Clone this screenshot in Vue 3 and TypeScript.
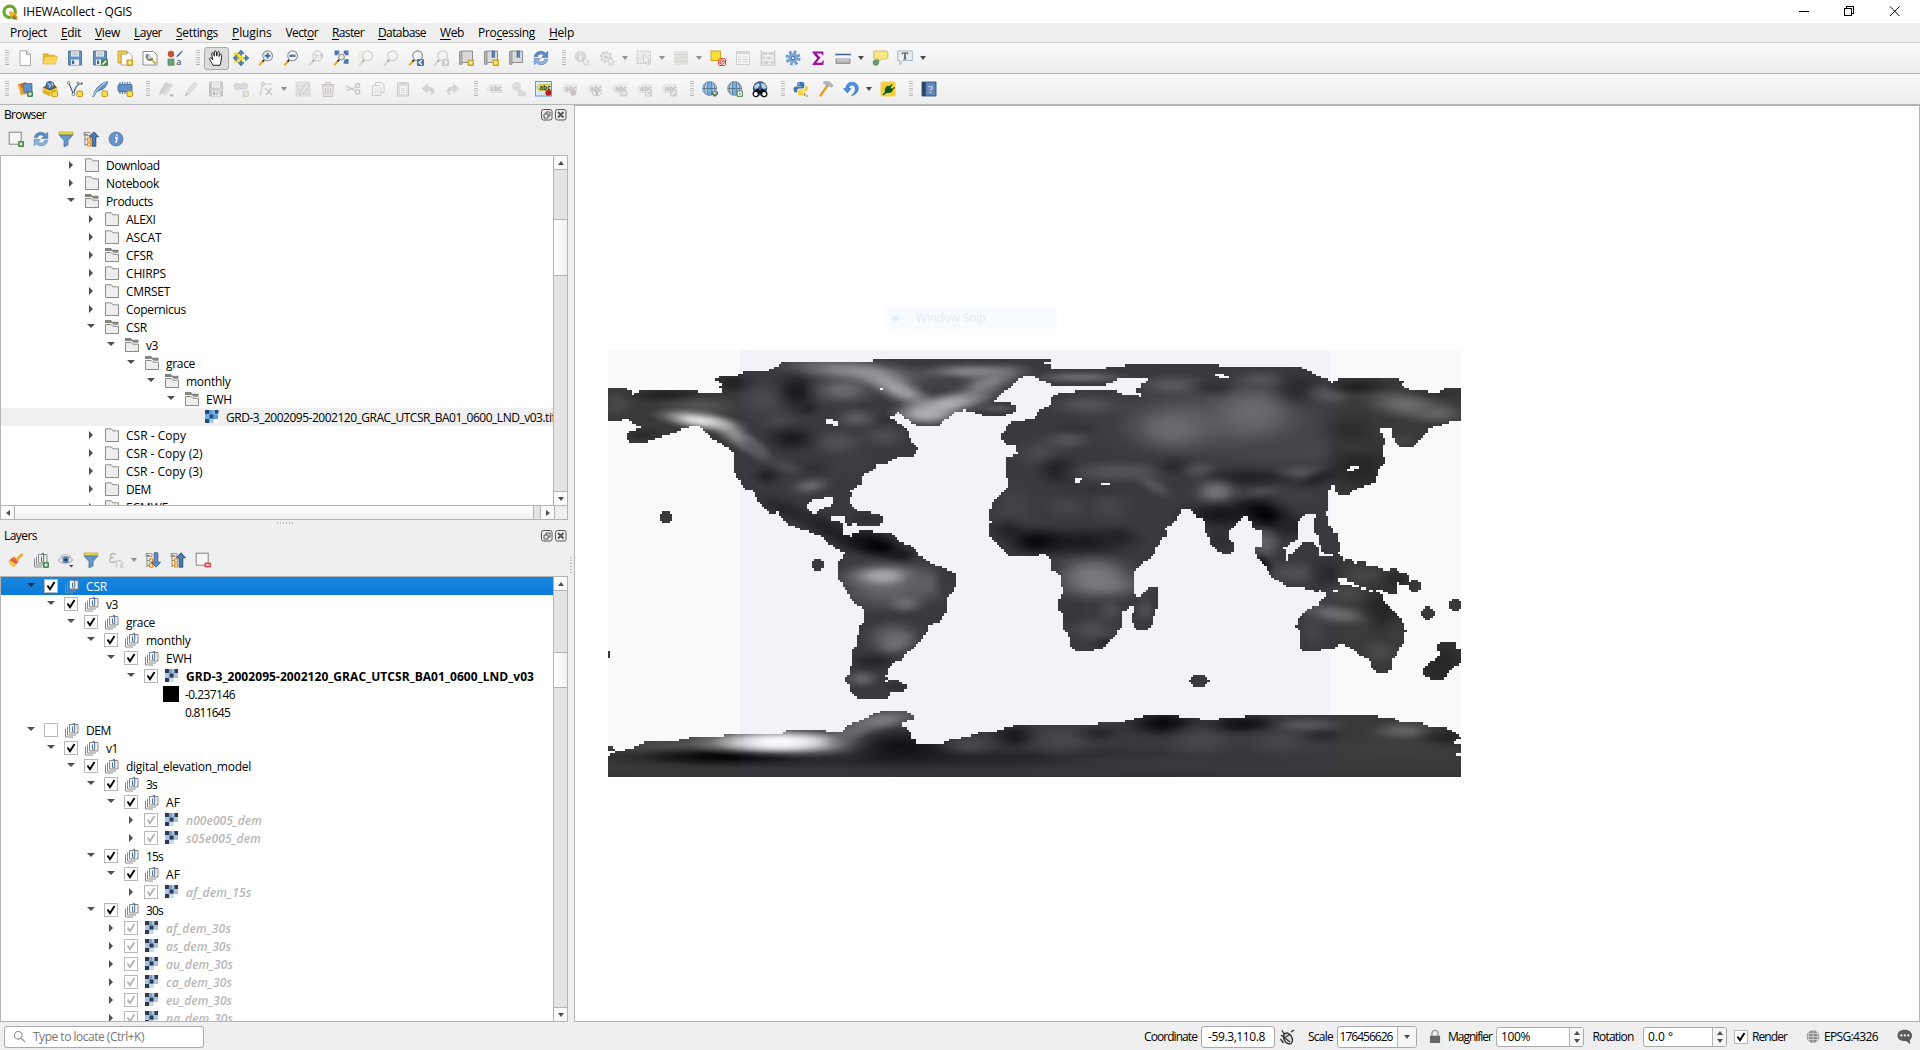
<script setup lang="ts">
type Pt = [number, number]

/* Spreads or tightens a label so that it takes the given width. */
const vFit = {
  mounted(el: HTMLElement, binding: { value?: number }) {
    if (!binding.value) return
    const n = (el.textContent || '').trim().length
    const w = el.getBoundingClientRect().width
    if (n > 1) el.style.letterSpacing = ((binding.value - w) / n).toFixed(3) + 'px'
  },
}

/* ---------- icons (16 x 16) ---------- */
const plusBadge = '<rect x="10" y="10" width="6" height="6" rx="1.2" fill="#4b8a4f"/><path d="M13 11.2v3.6M11.2 13h3.6" stroke="#fff" stroke-width="1.1"/>'
const starBadge = '<rect x="9.5" y="9.5" width="6.5" height="6.5" rx="1" fill="#c9a40e"/><path d="M12.75 10.4v4.8M10.4 12.8h4.8M11.1 11.1l3.3 3.3M14.4 11.1l-3.3 3.3" stroke="#fff6c0" stroke-width=".9"/>'
const newBadge = '<rect x="10" y="10" width="5.5" height="5.5" rx="1" fill="#f5dc4a" stroke="#b98f12" stroke-width=".9"/>'
const lens = '<path d="M1.3 15.2L5.6 10.6" stroke="#e0a81c" stroke-width="2"/><path d="M4.6 11.6l1.6-1.7" stroke="#222" stroke-width="1.6"/><circle cx="9.6" cy="5.8" r="4.9" fill="#f3f5f7" stroke="#8b8f93" stroke-width="1.1"/>'
const doc = '<path d="M3 .8h6.8L13.5 4.5v11H3z" fill="#fff" stroke="#a2a2a2" stroke-width=".9"/><path d="M9.6 .8v3.9h3.9" fill="#e8e8e8" stroke="#a2a2a2" stroke-width=".9"/>'
const disk = '<path d="M1.5 1h13v14h-13z" fill="#6490c2" stroke="#41668f" stroke-width=".8"/><rect x="4" y="1.2" width="8" height="5.4" fill="#e4e8ee"/><path d="M5 3h6M5 4.8h6" stroke="#9aa" stroke-width=".6"/><rect x="4" y="9.5" width="8" height="5.5" fill="#e9edf2"/><rect x="5" y="10.5" width="2.2" height="3.6" fill="#41668f"/>'
const refresh = '<path d="M1.2 6.8C2 3 4.600 1.300 8 1.300c2 0 3.400.7 4.600 1.900L14.800 1.200V7.400H8.600L10.700 5.200C9.900 4.400 9 4 8 4 6 4 5 5 4.500 6.800z" fill="#5b8cc0" stroke="#3f6ea3" stroke-width=".5"/><path d="M14.800 9.200c-.8 3.800-3.400 5.500-6.800 5.500-2 0-3.400-.7-4.600-1.900L1.200 14.800V8.600h6.200L5.300 10.800C6.100 11.600 7 12 8 12c2 0 3-1 3.500-2.800z" fill="#8fb4dc" stroke="#3f6ea3" stroke-width=".5"/>'
const tag = '<path d="M1 7.500L4 4h11.500v7.500H4z" fill="#e8e0b8" stroke="#b8b08c" stroke-width=".8"/><text x="4" y="10.400" font-size="6.500" font-weight="700" font-family="Open Sans, sans-serif" fill="#555">abc</text>'
const globe = '<circle cx="7.600" cy="7.500" r="6.900" fill="#b9d7f0" stroke="#6684a3" stroke-width=".9"/><path d="M5.300 1h4.600v13H5.300z" fill="#5b9bd8" opacity=".7"/><path d="M.8 7.500h13.600M3.800 2c-1.800 3.500-1.800 7.500 0 11M11.400 2c1.800 3.500 1.800 7.500 0 11M5.800 1c-.8 4-.8 9 0 13M9.400 1c.8 4 .8 9 0 13" fill="none" stroke="#54687e" stroke-width=".8"/>'
const book = '<path d="M3 1h11.500v11.500H4.500L3 14.500z" fill="#dadada" stroke="#8f8f8f"/><path d="M1.500 1.500H4v12.800H1.500z" fill="#b5b5b5" stroke="#888" stroke-width=".8"/>'
const mark = '<path d="M9 1h2.600v7L10.300 6.500 9 8z" fill="#4f80b8" stroke="#2f5786" stroke-width=".5"/>'
const tree = '<path d="M2 1v14M2 3.500h3M2 8.500h3M2 13.500h3" fill="none" stroke="#888" stroke-width="1"/><path d="M1 1.500h6v3H1z" fill="none" stroke="#888" stroke-width=".8"/><rect x="4.600" y="7" width="3" height="3" fill="#fff" stroke="#f08a12" stroke-width="1.200"/><rect x="4.600" y="12" width="3" height="3" fill="#fff" stroke="#f08a12" stroke-width="1.200"/>'

const icons: Record<string, string> = {
  newdoc: doc,
  open: '<path d="M.8 3.200h5l1.400 1.600h6v9H.8z" fill="#e9b62a"/><path d="M3 6.500h12.700L13.300 14H.9z" fill="#ffd75a" stroke="#e0ac28" stroke-width=".6"/>',
  save: disk,
  saveas: disk + '<rect x="9" y="9" width="7" height="7" rx="1" fill="#4b8a4f"/><path d="M10.500 14.500L14.300 10.700" stroke="#fff" stroke-width="1.500"/>',
  layout: '<path d="M4 2.500h8l3 3V15H4z" fill="#fff" stroke="#a2a2a2" stroke-width=".9"/><path d="M1 1h9v3H4v9H1z" fill="#f0cf54" stroke="#b8922a" stroke-width=".8"/>' + starBadge,
  layoutmgr: '<path d="M1 1.500h10.500l3.500 3.500V15H1z" fill="#fff" stroke="#8f8f8f" stroke-width="1"/><path d="M3.500 4h5v4h-5z" fill="#b9d0e8"/><path d="M8 8l6 6" stroke="#d8b23c" stroke-width="2.200"/><path d="M6 4.500a3 3 0 1 0 4.500 3.500" fill="none" stroke="#777" stroke-width="1.800"/>',
  style: '<circle cx="4" cy="4" r="3.200" fill="#c8502c"/><rect x="1" y="9" width="6" height="6.200" fill="#6fa077" stroke="#4d8057" stroke-width=".7"/><path d="M9 7.500l1.500-2.800L14.800.8l.8.8-3.800 4.500z" fill="#456f9f"/><text x="9.300" y="15" font-size="9" font-family="Open Sans, sans-serif" fill="#333">a</text>',
  hand: '<path d="M5 15.300C3.800 12.500 1.800 10.500 1.600 8.700c0-1.300 1.500-1.300 2.200-.2l1 1.400L3.700 3.900c-.2-1.400 1.400-1.700 1.800-.4l.9 2.700L6.300 2c0-1.400 1.800-1.400 2 0l.4 4.100.8-3.700c.4-1.300 2-1 1.900.4L11 6.500l.9-1.700c.7-1.100 2-.5 1.800.7-.4 3-.5 6-1.600 9.800z" fill="#fff" stroke="#222" stroke-width="1"/>',
  pan: '<path d="M1 2.500h6l3 3v7H1z" fill="#f6dd3a"/><path d="M8 0l3 3.500H5zM8 16l3-3.500H5zM0 8l3.500-3v6zM16 8l-3.500-3v6z" fill="#5583b8" stroke="#36608f" stroke-width=".6"/><path d="M8 3v2.500M8 13v-2.500M3 8h2.500M13 8h-2.500" stroke="#5583b8" stroke-width="2"/>',
  zin: lens + '<path d="M9.600 2.800v6M6.600 5.800h6" stroke="#3f6ea3" stroke-width="2"/>',
  zout: lens + '<path d="M6.600 5.800h6" stroke="#3f6ea3" stroke-width="2.200"/>',
  z11: lens + '<text x="6" y="8" font-size="6" font-weight="700" font-family="Open Sans, sans-serif" fill="#555">1:1</text>',
  zfull: '<path d="M1.500.5h4.800v4.800H1.500zM10.700.5h4.800v4.800h-4.800zM10.700 9h4.800v4.800h-4.800z" fill="#4a78ad"/><path d="M4.500 5.300l2-2M12.300 5.300l-2-2M12.300 9l-2 2" stroke="#f4f4f4" stroke-width="1"/><path d="M1.300 15.200l4.300-5" stroke="#e0a81c" stroke-width="2"/><path d="M4.600 11.600l1.800-2.200" stroke="#222" stroke-width="1.600"/><circle cx="8.500" cy="7" r="2.900" fill="#eee" stroke="#888"/>',
  zsel: '<rect x="0" y="1" width="8" height="9" fill="#f0e27a"/>' + lens,
  zlayer: lens,
  zlast: lens + '<rect x="9" y="9" width="7" height="7" rx="1" fill="#4a78ad"/><path d="M14 10.300l-3 2.200 3 2.200" fill="none" stroke="#fff" stroke-width="1.300"/>',
  znext: lens + '<rect x="9" y="9" width="7" height="7" rx="1" fill="#888"/><path d="M11 10.300l3 2.200-3 2.200" fill="none" stroke="#fff" stroke-width="1.300"/>',
  view: book + starBadge,
  bmnew: book + mark + starBadge,
  bm: book + mark,
  refresh,
  ident: '<circle cx="6.500" cy="6.500" r="5.800" fill="#9aa9bb"/><path d="M6.500 5.500v4.500M6.500 2.500v1.600" stroke="#fff" stroke-width="1.800"/><path d="M9 8l6.500 3.500-2.500.8 2 2.200-1.300 1-2-2.200-1.200 2z" fill="#fff" stroke="#777" stroke-width=".8"/>',
  action: '<circle cx="7" cy="7" r="5" fill="none" stroke="#999" stroke-width="2.400" stroke-dasharray="2.400 1.400"/><circle cx="7" cy="7" r="4.200" fill="#ddd" stroke="#999"/><path d="M5.500 5l3.500 2-3.500 2z" fill="#777"/><path d="M9 8l6.500 3.500-2.500.8 2 2.200-1.300 1-2-2.200-1.200 2z" fill="#fff" stroke="#777" stroke-width=".8"/>',
  select: '<rect x="1" y="1" width="13.500" height="12.500" fill="#ddd9b4" stroke="#777" stroke-dasharray="2 1.400"/><path d="M7 5l7.500 5.500-3 .5 2 3.200-1.500.8-2-3.200-2 2z" fill="#fff" stroke="#777" stroke-width=".8"/>',
  table: '<path d="M1 1h14v14H1z" fill="#cfcaa4"/><path d="M1 4.500h14M1 8h14M1 11.500h14" stroke="#a39f84" stroke-width="1"/>',
  desel: '<rect x="1" y="1" width="9.500" height="9.500" fill="#fbe03c" stroke="#c9a91c"/><rect x="8.700" y="8.700" width="6.800" height="6.800" rx="1" fill="#fff" stroke="#d33"/><circle cx="12.100" cy="12.100" r="2.200" fill="none" stroke="#d33" stroke-width="1"/><path d="M10.500 13.700l3.200-3.200" stroke="#d33"/>',
  attr: '<rect x="1.500" y="1.500" width="13" height="13" fill="#fff" stroke="#999"/><path d="M2 3h12" stroke="#9ab" stroke-width="2.500"/><path d="M3 7h3M7.500 7h5.500M3 9.500h3M7.500 9.500h5.500M3 12h3M7.500 12h5.500" stroke="#999"/>',
  calc: '<path d="M1.500.5v15M14.500.5v15" stroke="#888" stroke-width="1.600"/><path d="M1.500 3.500h13M1.500 8h13M1.500 12.500h13" stroke="#aaa"/><path d="M4 2v3M6 2v3M10 2v3M12 2v3M4 6.500v3M8 6.500v3M10 6.500v3M5 11v3M7 11v3M12 11v3" stroke="#888" stroke-width="1.500"/><path d="M1 15.200h14" stroke="#888"/>',
  gear: '<circle cx="8" cy="8" r="6" fill="none" stroke="#6a98cc" stroke-width="3" stroke-dasharray="2.600 2.110"/><circle cx="8" cy="8" r="5" fill="#7ba6d6"/><circle cx="8" cy="8" r="2.200" fill="#4f7fb5"/><circle cx="8" cy="8" r="1.100" fill="#f4f4f4"/>',
  sigma: '<path d="M2.500 1.500h10.800v3.800h-1C12 3.800 11.500 3.400 10 3.400H6.500l4 4.300-4.200 5H10.400c1.500 0 2.100-.5 2.500-2.200h1l-.6 4.500H2.500v-1L7.200 8.300 2.500 2.600z" fill="#a0109c"/>',
  measure: '<path d="M.8 4.500h14.600" stroke="#3b5f8a" stroke-width="1.500"/><path d="M.8 3v3M15.200 3v3" stroke="#999"/><rect x="1" y="9" width="14" height="4.500" fill="#b4b4b4" stroke="#888" stroke-width=".8"/><path d="M3 9v2M5 9v2M7 9v2M9 9v2M11 9v2M13 9v2" stroke="#fff" stroke-width=".7"/>',
  tip: '<path d="M3 1h11c1.200 0 1.800.8 1.800 1.800V7c0 1.200-.8 2-2 2H9.500L6.500 11.500V9H4C2.800 9 1.800 8.200 1.800 7V2.500C1.800 1.500 2.200 1 3 1z" fill="#f8e88a" stroke="#d3b846" stroke-width=".9"/><circle cx="3.800" cy="12.600" r="2.700" fill="#6b9e74" stroke="#437a4e" stroke-width=".7"/><path d="M5.500 9.500l1.500 2" stroke="#888"/>',
  textann: '<path d="M.8 1h14.500v9.500H6L2.800 14.800v-4.300h-2z" fill="#eaf0f5" stroke="#a9b4bd" stroke-width="1"/><path d="M4.800 2.600h6.400v2h-.7l-.5-1H8.800v4.800l1 .5v.5H6.200v-.5l1-.5V3.600H6l-.5 1h-.7z" fill="#555"/>',
  dsm: '<path d="M1 3.500l8-2.500 3 8-8 3z" fill="#d8662c"/><path d="M2 9L.5 5 4 4z" fill="#f3c63a"/><path d="M3 6.500l6 .5 1.500 6-7 1z" fill="#e9a42c"/><path d="M6 2.500h9v9H7z" fill="#5f91c8" stroke="#3d6a9c" stroke-width=".7"/>' + plusBadge,
  gpkg: '<path d="M.8 6.500L8 9.500v6L.8 12z" fill="#e2ae22"/><path d="M15.200 6.500L8 9.500v6l7.200-3.500z" fill="#f6d24c"/><path d="M.8 6.500L5 4l7-.5 3.200 3L8 9.500z" fill="#7a5a14"/><circle cx="8" cy="4.400" r="4" fill="#4e7ba8" stroke="#2c4a6c" stroke-width=".8"/><path d="M5.500 2.500l3 1.500-1 2.500M10 1.500l1 3" stroke="#e3edf5" fill="none" stroke-width="1"/><path d="M.8 6.800L8 9.800l7.200-3v2L8 12 .8 9z" fill="#f0c63c"/>' + newBadge,
  shp: '<path d="M1.500 1.500L6.500 13C8 8 9 3 15 2.500" fill="none" stroke="#44607f" stroke-width="1.200"/><circle cx="1.700" cy="1.800" r="1.300" fill="#fff" stroke="#555" stroke-width=".7"/><circle cx="6.500" cy="13.200" r="1.400" fill="#fff" stroke="#555" stroke-width=".7"/><circle cx="11" cy="2" r="1.100" fill="#fff" stroke="#555" stroke-width=".7"/><circle cx="14.800" cy="2.500" r="1" fill="#555"/>' + newBadge,
  spatia: '<path d="M.6 15.500C3 8 8 2 15.500.5c-.3 4-3 8-8 9-2 .6-3.500 1.500-5.600 6z" fill="#6693c6" stroke="#3f6896" stroke-width=".7"/><path d="M1 15C4 9 9 4 14 1.500" fill="none" stroke="#dfeaf5" stroke-width=".9"/>' + newBadge,
  mem: '<path d="M3 1v12M5.500 1v12M8 1v12M10.500 1v12M13 1v12" stroke="#5580b0" stroke-width="1.200"/><rect x="1" y="3.500" width="14" height="7" rx="1" fill="#6391c6" stroke="#3f6a9c" stroke-width=".8"/>' + newBadge,
  edits: '<path d="M1.500 13.500L2.500 10 8 1.500l3 2L5 12z" fill="#999" stroke="#777" stroke-width=".7"/><path d="M6 14l1-3.500 5-8 2.600 1.600-5.500 8.200z" fill="#bbb" stroke="#888" stroke-width=".7"/><path d="M11 13.500h5l-2.500 2.500z" fill="#444"/>',
  pencil: '<path d="M2.500 15l1-4L11.500 1.200l2.800 2L6 12.800z" fill="#c9c9a8" stroke="#888" stroke-width=".9"/><path d="M2.500 15l.6-2.400 1.400 1z" fill="#444"/>',
  saveed: disk + '<path d="M8 14l.8-3L14 5l2 1.600-5.200 6.200z" fill="#bbb" stroke="#777" stroke-width=".7"/>',
  feat: '<path d="M1 4.500C1 2 4 1.500 6 2.800 8 4 9 1.500 12 2c3 .4 3.500 3 2 5-1 1-3 .5-5 .5S7 9.500 4.500 9C2 8.500 1 7 1 4.500z" fill="#a3b5a6" stroke="#888" stroke-width=".8"/>' + starBadge,
  vertex: '<path d="M2 14L5 3h9" fill="none" stroke="#888" stroke-width="1.200"/><circle cx="5" cy="3" r="1.700" fill="#ccc" stroke="#777"/><path d="M7 7l7 7M13.500 7L8 14" stroke="#888" stroke-width="1.700"/>',
  multi: '<path d="M1 1h14v14H1z" fill="#cfcaa4" stroke="#b0ab8b" stroke-width=".7"/><path d="M1 5h14M1 9h14M1 12.500h14" stroke="#a39f84"/><path d="M4.500 14l.8-3.200L12 2l2.600 2-7 8.600z" fill="#d8d8d8" stroke="#777" stroke-width=".8"/>',
  trash: '<path d="M2.500 5h11l-.8 10.500H3.300z" fill="#e8caca" stroke="#b06a6a" stroke-width="1"/><path d="M1.200 3.600h13.600M6 3V1.400h4V3" fill="none" stroke="#b06a6a" stroke-width="1.300"/><path d="M5.500 7v6.500M8 7v6.500M10.500 7v6.500" stroke="#b06a6a"/>',
  cut: '<path d="M.8 4.800l9.500 4.700M1 9.500l9.500-3" stroke="#777" stroke-width="1.300"/><circle cx="12.600" cy="4.600" r="2.100" fill="none" stroke="#777" stroke-width="1.300"/><circle cx="12.600" cy="11" r="2.100" fill="none" stroke="#777" stroke-width="1.300"/>',
  copy: '<path d="M5.500 1.500h6l2.500 2.500v7.500H5.500z" fill="#fff" stroke="#888"/><path d="M2.500 4.500h6L11 7v7.500H2.500z" fill="#f5f5f5" stroke="#888"/><path d="M4.500 8h4M4.500 10h4.500M4.500 12h4.500" stroke="#aaa" stroke-width=".8"/>',
  paste: '<rect x="2.500" y="2" width="11" height="13" fill="#ccc" stroke="#888"/><rect x="5" y="1" width="6" height="2.600" fill="#999"/><rect x="4.500" y="5" width="7" height="8.500" fill="#fff" stroke="#aaa" stroke-width=".6"/><path d="M6 7.500h4M6 9.500h4M6 11.500h4" stroke="#999" stroke-width=".8"/>',
  undo: '<path d="M2 7.500L7.500 3v3c4.500 0 6.500 1.500 6.500 4.300 0 1.700-1.500 3-3.500 3.500.8-1 1.200-2 .8-3C10.800 9.500 9.500 9 7.500 9v3z" fill="#b5a090" stroke="#938a82" stroke-width=".6"/>',
  redo: '<path d="M14 7.500L8.500 3v3C4 6 2 7.500 2 10.300c0 1.700 1.500 3 3.500 3.500-.8-1-1.200-2-.8-3C5.200 9.500 6.500 9 8.500 9v3z" fill="#9db09d" stroke="#8a958a" stroke-width=".6"/>',
  label: tag,
  diagram: '<circle cx="5.500" cy="5.500" r="4.500" fill="#b5b5b5"/><path d="M5.500 1a4.500 4.500 0 0 1 4.500 4.500H5.500z" fill="#d4b0b0"/><path d="M8 9h3v6H8zM11.500 11.500h3V15h-3zM5.500 7H8v8" fill="#a9bba9" stroke="#999" stroke-width=".6"/>',
  labelhl: '<rect x="-.5" y=".5" width="16" height="14.500" fill="#d7e9fa" stroke="#5b9be0" stroke-width="1"/><path d="M1 6.500L3.500 3.500H14v6.300H3.500z" fill="#fbe54e" stroke="#c8a81c" stroke-width=".7"/><text x="3.200" y="9" font-size="6.500" font-weight="700" font-family="Open Sans, sans-serif" fill="#333">abc</text><circle cx="12.300" cy="11.800" r="3" fill="#b82222"/>',
  lpin: tag + '<circle cx="12.300" cy="12" r="2.800" fill="#a66"/>',
  leye: tag + '<path d="M6 12.500c2.500-3 7-3 9.500 0-2.500 3-7 3-9.500 0z" fill="#fff" stroke="#777"/><circle cx="10.800" cy="12.500" r="1.400" fill="#555"/>',
  lmove: tag + '<rect x="9" y="8.500" width="7" height="7" rx="1" fill="#8c9a8c"/><path d="M10 12h4M12.500 10l2 2-2 2" stroke="#fff" fill="none"/>',
  lrot: tag + '<rect x="9" y="8.500" width="7" height="7" rx="1" fill="#8c9a8c"/><path d="M14.200 11a2 2 0 1 0 0 2" stroke="#fff" fill="none" stroke-width="1.200"/>',
  lprop: tag + '<rect x="9" y="8.500" width="7" height="7" rx="1" fill="#8c9a8c"/><path d="M10.500 14l3.700-3.700" stroke="#fff" stroke-width="1.400"/>',
  gadd: globe + '<path d="M9.500 10.500h6.500v2.500L12.800 16 9.500 13z" fill="#3f6b45"/><path d="M10.800 12h4M12.800 10.800v3" stroke="#e4f2e4" stroke-width="1"/>',
  gset: globe + '<rect x="9.500" y="9.500" width="6.500" height="6.500" rx="1" fill="#5d9a63"/><circle cx="12.800" cy="12.700" r="1.700" fill="none" stroke="#fff" stroke-width="1.300"/>',
  gfind: '<circle cx="8" cy="7.500" r="7.200" fill="#3b5e88"/><path d="M2 5l4-3 2 2-2 3-3 1zM9 2l4 1 1.500 4-3 1-2-2zM4 10l3 .5" fill="#b9d2e6"/><path d="M2.500 9.500L5 8h1.700l.5 1.500h1.600l.5-1.500H11l2.500 1.500L15.300 13H.7z" fill="#111"/><circle cx="3.800" cy="13" r="2.600" fill="#fff" stroke="#111" stroke-width="1.300"/><circle cx="12.200" cy="13" r="2.600" fill="#fff" stroke="#111" stroke-width="1.300"/>',
  python: '<path d="M7.500.8c-2.500 0-3.300 1-3.300 2.300V5h4v.6H2.700C1 5.600.6 7 .6 8.500c0 1.700.7 2.900 2.200 2.900h1.400V9.500C4.200 8 5.200 7.400 6.500 7.400h3c1.200 0 1.800-.8 1.800-1.900V3C11.300 1.500 9.800.8 7.500.8z" fill="#3d77ab"/><path d="M8.200 14.800c2.500 0 3.300-1 3.300-2.300v-1.700h-4v-.6H13c1.500 0 2-1.300 2-2.800s-.7-2.700-2-2.700h-1v1.700c0 1.500-1 2-2.300 2h-3C5.400 8.400 4.900 9.400 4.900 10.400v2.200c0 1.500 1.200 2.200 3.300 2.200z" fill="#fbd343"/><circle cx="6" cy="2.900" r=".7" fill="#fff"/><path d="M11 12.500l1.500 1-1.500 1.200M13 15h2.200" stroke="#555" fill="none" stroke-width=".8"/>',
  hammer: '<path d="M2 15.200L9.500 4.500" stroke="#e2a52c" stroke-width="2.600"/><path d="M5 1.800C8-.3 11 .5 12.500 2L15 4.300l-1.600 2-1.800-1.500-2 .7L8 3.800C7.200 2.800 6.500 2.200 5 1.800z" fill="#b5b9bd" stroke="#83878b" stroke-width=".6"/>',
  blueundo: '<path d="M.5 7.500h2.300C3 3.500 5.500 1.200 9 1.200c3.700 0 6.300 2.500 6.300 6 0 3.800-2.800 6.500-7 7.600 2.600-2 4-4.300 4-6.800C12.300 5.600 11 4 8.800 4 7 4 6 5.200 5.800 7.500h2.300L4.300 12z" fill="#4a8fe0" stroke="#2f6fbe" stroke-width=".6"/>',
  plug: '<rect x=".5" y=".5" width="15" height="15" rx="2" fill="#f6cf3e"/><path d="M2.500 13.500L5 11C4 9 5 7 7 5l1-.6 1.200 1L11.500 3l1 1-2 2.200 1.500 1.600 2.200-2 .8.9-2.500 2.300C13 11 10 12.500 6.500 12l-3 2.500z" fill="#0d5a1c"/>',
  help: '<path d="M1 1h14v14H1z" fill="#5c88bd" stroke="#2c4766" stroke-width=".8"/><path d="M1 1h3.800v14H1z" fill="#2d4866"/><text x="7" y="12" font-size="11" font-family="Liberation Serif, serif" fill="#fff">?</text>',
  addl: '<rect x="1.200" y="1.200" width="12" height="12" fill="#f6f6f6" stroke="#858585" stroke-width="1"/>' + plusBadge,
  filter: '<path d="M1 1h14v2.800H1z" fill="#e9df3c" stroke="#b5a22a" stroke-width=".7"/><path d="M1.200 4h13.600L10 9.500V14l-4 1.800V9.500z" fill="#6a98cc" stroke="#48719f" stroke-width=".8"/>',
  collapse: tree + '<path d="M11 .8l4.500 5h-2.700v9.400H9.200V5.800H6.500z" fill="#4a7db5" stroke="#1f3e62" stroke-width=".8"/>',
  expand: tree + '<path d="M11 15.200l4.500-5h-2.700V.8H9.200v9.400H6.500z" fill="#5d8fc6" stroke="#2f5580" stroke-width=".8"/>',
  info: '<circle cx="8" cy="8" r="7" fill="#6391c8" stroke="#476f9f" stroke-width=".7"/><path d="M7 6.800h2l-1 5M8.700 3.500v1.700" fill="none" stroke="#fff" stroke-width="1.600"/>',
  brush: '<path d="M.6 9L6 4.500l4.800 4.600L6 15C3.800 14 1.800 12 .6 9z" fill="#e9732c"/><path d="M.6 9l2.600-2 5 5.300L6 15C3.800 14 1.800 12 .6 9z" fill="#f6c63c"/><path d="M1.800 8L4 6.500l5.500 4.300L8.300 12z" fill="#d9594a"/><path d="M8.500 8L14.500 2" stroke="#e5b33c" stroke-width="2.600"/>',
  group: '<path d="M1.500 6.500v8.500H9" fill="none" stroke="#85898c" stroke-width="1"/><path d="M3.500 4.500v8.500h8.500" fill="none" stroke="#85898c" stroke-width="1"/><path d="M5.500 2.500h8.500v8.500H5.500z" fill="#f3f3f0" stroke="#85898c" stroke-width="1"/><path d="M8.500 4.500v4.500c0 1.300 2.200 1.300 2.200 0V2c0-1.300-1.600-1.300-1.600 0" fill="none" stroke="#476d95" stroke-width="1"/>',
  eye: '<path d="M.5 8.500C3.500 3.500 11 3 14.500 8.200 11 12 4 12.200.5 8.500z" fill="#f0f2f3" stroke="#8d9498" stroke-width="1"/><circle cx="7.700" cy="7.800" r="3.300" fill="#5883b4"/><circle cx="7.700" cy="7.800" r="1.400" fill="#1d3450"/><path d="M2 4.500C5 2 10 2 13 4.500" fill="none" stroke="#aab" stroke-width=".8"/><path d="M11 13h4.600l-2.300 2.500z" fill="#444"/>',
  eps: '<path d="M8 2.500C5.500.5 2 1.800 2.500 4c.3 1.200 1.500 1.700 3 1.700C3.500 5.700 1.800 6.600 1.800 8.200c0 2.400 4 3 6.200.8" fill="none" stroke="#999" stroke-width="1.500"/><path d="M8.500 9.500v6M8.500 9.500c2-1.500 5-1 6 1v5h-1.500v-4" fill="none" stroke="#bbb" stroke-width="1.500"/>',
  removel: '<rect x="1.200" y="1.200" width="12" height="12" fill="#f6f6f6" stroke="#858585" stroke-width="1"/><rect x="9.500" y="10.500" width="6.500" height="5" rx="1.200" fill="#e2454b"/><path d="M11 13h3.600" stroke="#fff" stroke-width="1.300"/>',
  folder: '<path d="M1.500 1.800h5.800l1.500 2h5.700v10.700h-13z" fill="#ededed" stroke="#8b8b88" stroke-width="1"/>',
  folderopen: '<path d="M1 1h6l1.200 1.800h6.300v3H9.500L8 4H1z" fill="#85857f"/><path d="M1.500 5.500h5.800l1.500 1.700h5.700v7.300h-13z" fill="#ededed" stroke="#8b8b88" stroke-width="1"/>',
  raster: '<path d="M1 1h13v13H1z" fill="#79aee0"/><path d="M1 1h4v4H1zM11 1h3.500v3.500H11zM5.500 5.500h4v4h-4zM1 10h4v4H1z" fill="#1f4e7c"/><path d="M5 1h3v4H5zM9.500 6h4.500v4H9.500zM5 10h4v4H5z" fill="#5d97cf"/><path d="M9.500 10H14v4H9.500z" fill="#fff"/><path d="M5.500 10h4v4h-4z" fill="#a8cbee"/>',
  rasterl: '<path d="M1 1h13v13H1z" fill="#a9c3e2"/><path d="M1 1h4v4H1zM10.500 1H14v4h-3.500zM5.500 5.500h4v4h-4zM1 10h4v4H1z" fill="#2b3a50"/><path d="M5 1h3v4H5z" fill="#7e9dc4"/><path d="M9.500 10H14v4H9.500z" fill="#fff"/><path d="M5.500 10h4v4h-4z" fill="#c6d9ee"/>',
  mouse: '<ellipse cx="9" cy="9.500" rx="4" ry="5.800" transform="rotate(-28 9 9.500)" fill="#ddd" stroke="#333" stroke-width="1.400"/><path d="M3 1.500l2.500 4M5.500 8.500l5.500-3M2 6l9 7M1.500 10l3 4M12 3l3-2" stroke="#333" stroke-width="1.400"/>',
  lock: '<path d="M4.500 8V4.500a3.500 3.500 0 0 1 7 0V8" fill="none" stroke="#9b9b9b" stroke-width="1.700"/><rect x="2.200" y="7" width="11.600" height="8.500" rx="1" fill="#666"/>',
  crs: '<circle cx="8" cy="7.500" r="6.300" fill="#8b8b8b"/><path d="M8 1v14M1.500 7.500h13M4.500 2.500c-1.500 3-1.500 7 0 10M11.500 2.500c1.500 3 1.500 7 0 10M3 4.500h10M3 10.500h10" fill="none" stroke="#e3e3e3" stroke-width=".7"/>',
  bubble: '<path d="M7.700.8c4.600 0 7.300 2.300 7.300 5.700 0 2.300-.8 3.600-2.300 4.600l.6 4.100-4.300-3.200H7.700C3 12 .5 9.800.5 6.500S3 .8 7.700.8z" fill="#5c5c5c"/><circle cx="4.300" cy="6.400" r="1.100" fill="#fff"/><circle cx="7.800" cy="6.400" r="1.100" fill="#fff"/><circle cx="11.300" cy="6.400" r="1.100" fill="#fff"/>',
  search: '<circle cx="6.500" cy="6.500" r="4.700" fill="none" stroke="#888" stroke-width="1.300"/><path d="M10 10l5 5" stroke="#888" stroke-width="1.500"/>',
}

/* "|" is a grip, "v" a menu arrow, a leading "-" a disabled entry */
const bar1 = '| newdoc open save saveas layout layoutmgr style | *hand pan zin zout -z11 zfull -zsel -zlayer zlast -znext view bmnew bm refresh | -ident -action -v -select -v -table -v desel -attr -calc gear sigma measure v tip textann v'.split(' ')
const bar2 = '| dsm gpkg shp spatia mem | -edits -pencil -saveed -feat -vertex -v -multi -trash -cut -copy -paste -undo -redo | -label -diagram labelhl -lpin -leye -lmove -lrot -lprop | gadd gset gfind | python hammer blueundo v plug | help'.split(' ')

const menus: [string, string, string, number][] = [
  ['Pro', 'j', 'ect', 37], ['', 'E', 'dit', 20], ['', 'V', 'iew', 25], ['', 'L', 'ayer', 28], ['', 'S', 'ettings', 42],
  ['', 'P', 'lugins', 39.5], ['Vect', 'o', 'r', 32.5], ['', 'R', 'aster', 32], ['', 'D', 'atabase', 48], ['', 'W', 'eb', 24],
  ['Pro', 'c', 'essing', 57], ['', 'H', 'elp', 25],
]

interface Row { l: number; t: string; w: number; i?: string; a?: string; c?: number; k?: string }
const browser: Row[] = [
  { l: 0, t: 'Download', w: 53.6, i: 'folder', a: 'r' },
  { l: 0, t: 'Notebook', w: 53, i: 'folder', a: 'r' },
  { l: 0, t: 'Products', w: 47, i: 'folderopen', a: 'd' },
  { l: 1, t: 'ALEXI', w: 29.6, i: 'folder', a: 'r' },
  { l: 1, t: 'ASCAT', w: 35.5, i: 'folder', a: 'r' },
  { l: 1, t: 'CFSR', w: 27, i: 'folderopen', a: 'r' },
  { l: 1, t: 'CHIRPS', w: 40, i: 'folder', a: 'r' },
  { l: 1, t: 'CMRSET', w: 44, i: 'folder', a: 'r' },
  { l: 1, t: 'Copernicus', w: 60, i: 'folder', a: 'r' },
  { l: 1, t: 'CSR', w: 21, i: 'folderopen', a: 'd' },
  { l: 2, t: 'v3', w: 12, i: 'folderopen', a: 'd' },
  { l: 3, t: 'grace', w: 29, i: 'folderopen', a: 'd' },
  { l: 4, t: 'monthly', w: 44.5, i: 'folderopen', a: 'd' },
  { l: 5, t: 'EWH', w: 26, i: 'folderopen', a: 'd' },
  { l: 6, t: 'GRD-3_2002095-2002120_GRAC_UTCSR_BA01_0600_LND_v03.tif', w: 329, i: 'raster', k: 'hover' },
  { l: 1, t: 'CSR - Copy', w: 60, i: 'folder', a: 'r' },
  { l: 1, t: 'CSR - Copy (2)', w: 76.6, i: 'folder', a: 'r' },
  { l: 1, t: 'CSR - Copy (3)', w: 76.6, i: 'folder', a: 'r' },
  { l: 1, t: 'DEM', w: 25, i: 'folder', a: 'r' },
  { l: 1, t: 'ECMWF', w: 42, i: 'folder', a: 'r' },
]
const g = (l: number, t: string, w: number, c = 1, k = ''): Row => ({ l, t, w, c, i: 'group', a: 'd', k })
const r = (l: number, t: string, w: number): Row => ({ l, t, w, c: 2, i: 'rasterl', a: 'r', k: 'off' })
const layers: Row[] = [
  g(0, 'CSR', 21, 1, 'sel'), g(1, 'v3', 12), g(2, 'grace', 29), g(3, 'monthly', 44.5), g(4, 'EWH', 26),
  { l: 5, t: 'GRD-3_2002095-2002120_GRAC_UTCSR_BA01_0600_LND_v03', w: 348, c: 1, i: 'rasterl', a: 'd', k: 'bold' },
  { l: 5, t: '-0.237146', w: 50, k: 'legend black' },
  { l: 5, t: '0.811645', w: 45, k: 'legend' },
  g(0, 'DEM', 25, 0), g(1, 'v1', 12), g(2, 'digital_elevation_model', 125), g(3, '3s', 11), g(4, 'AF', 14),
  r(5, 'n00e005_dem', 76), r(5, 's05e005_dem', 75), g(3, '15s', 17), g(4, 'AF', 14), r(5, 'af_dem_15s', 65.500),
  g(3, '30s', 17), r(4, 'af_dem_30s', 65), r(4, 'as_dem_30s', 65), r(4, 'au_dem_30s', 67), r(4, 'ca_dem_30s', 66),
  r(4, 'eu_dem_30s', 66), r(4, 'na_dem_30s', 67),
]

/* ---------- raster map ---------- */
const W = 853, H = 427, COLS = 360, ROWS = 180
const P = (s: string): Pt[] => s.trim().split(/\s+/).map(p => p.split(',').map(Number) as Pt)

/* outlines in thirds of a pixel, map origin at 24,30 */
const land: Pt[][] = [
  P(`24,145 97,148 97,165 103,162 120,153 125,150 294,150 294,158 365,158 365,150 358,140 365,130 358,124 345,122 347,115 367,108 412,108 412,103 430,100 430,93 500,93 528,80 545,66 818,66 818,57 1353,57 1353,66 1332,66 1332,71 1353,72 1353,87
   1518,87 1518,81 1575,81 1575,72 1857,72 1857,81 2105,81 2120,90 2130,95 2145,103 2165,112 2180,118 2190,124 2195,128 2205,124 2215,115 2397,115 2397,124 2412,126 2405,135 2410,140 2425,145 2430,150 2484,150 2484,158 2520,158 2520,152 2532,150 2535,145 2583,145
   2583,243 2547,243 2547,250 2525,252 2525,258 2500,259 2485,267 2482,280 2465,292 2455,303 2442,315 2440,321 2398,321 2385,300 2376,290 2376,265 2340,265 2340,275 2348,280 2354,295 2354,315 2348,320 2348,350 2354,355 2354,372 2340,380 2332,395 2332,405 2325,425 2312,435 2295,437 2290,444 2270,446 2250,458 2248,465 2216,465 2208,455 2205,435 2193,435 2190,450 2184,453 2184,515 2178,518 2184,530 2184,555 2195,562 2200,575 2212,582 2215,600 2220,608 2220,630 2210,641
   2228,650 2230,663 2240,658 2260,660 2262,670 2275,664 2300,667 2302,676 2330,680 2350,684 2352,692 2370,688 2390,686 2395,692 2398,700 2420,700 2426,715 2426,732 2405,735 2395,728 2388,745 2388,760 2365,760 2350,752 2325,752 2335,757 2348,765 2352,785 2368,798 2390,820 2407,840 2413,865 2420,873 2412,880 2412,910 2400,925 2388,950 2376,958 2376,985 2362,998 2330,998 2315,985 2312,960 2290,952 2265,932 2235,918 2230,912 2215,915 2212,922 2165,928 2162,932 2105,932 2100,925 2100,875 2093,863 2085,858 2093,850 2098,830 2115,815 2135,802 2158,798 2160,785 2175,772 2180,757 2160,752 2145,755 2140,750 2118,748 2110,740 2060,740 2048,728 2025,718 2012,705 2000,685 1995,672 1980,660 1968,645 1965,625 1985,618
   1985,570 1965,570 1958,555 1955,545 1947,543 1945,532 1940,528 1935,528 1930,535 1915,543 1905,555 1890,570 1887,598 1900,608 1902,635 1890,642 1870,640 1850,630 1835,615 1828,598 1820,585 1815,565 1810,535 1790,532 1775,515 1773,507 1743,507 1743,518 1730,530 1730,543 1718,550 1700,562 1697,568 1702,573 1702,588 1682,600 1680,612 1668,625 1665,638 1650,655 1632,668 1610,685 1602,693
   1602,760 1608,770 1620,770 1630,757 1645,748 1652,741 1668,741 1674,752 1674,805 1665,812 1660,840 1655,858 1642,868 1615,869 1600,858 1596,840 1597,820 1605,812 1604,795 1592,798 1580,808 1568,815 1566,858 1558,868 1542,890 1525,908 1510,922 1495,928 1470,932 1425,932 1411,920 1411,895 1400,880 1392,868 1388,820 1378,812 1374,790 1380,770 1388,755 1384,740 1380,705 1355,690 1353,660 1340,648 1332,642 1303,648 1225,648 1200,620 1180,600 1168,590 1168,555 1175,545 1168,535 1168,510 1178,503 1178,485 1195,468 1205,458 1215,450 1224,440 1224,420 1218,410 1218,355 1232,350 1252,340 1245,325 1238,325 1248,318 1222,315 1210,300 1203,295 1203,280 1215,270 1222,255 1240,243 1303,237 1310,225 1318,210 1335,204 1352,195
   1352,172 1370,162 1426,158 1426,150 1551,150 1551,158 1576,165 1608,165 1623,171 1623,163 1612,158 1610,147 1623,145 1626,131 1640,124 1652,115 1560,115 1545,124 1518,131 1518,138 1360,138 1353,130 1330,124 1310,115 1300,110 1270,108 1255,120 1240,128 1238,138 1220,150 1205,160 1195,175 1180,180 1190,186 1225,187 1245,195 1248,210 1240,220 1215,227 1148,227 1125,217 1100,212 1095,207 1088,213 1062,217 1042,235 1020,255 955,257 930,245 912,230 900,222 893,216 888,225 870,232 885,240 897,250 912,262 928,275 932,305 942,315 953,325 945,345 940,350 890,353 862,368 828,375 825,388 800,398 788,408 785,430 768,442 750,453 756,465 750,475 752,495 765,508 775,513 810,513 815,520 840,522 848,533 848,548 840,557 775,557 770,549 760,552 742,557 735,545 735,530 693,530 693,540 728,548 728,585 752,590
   760,580 778,578 778,570 818,570 820,578 875,578 885,590 900,605 930,615 945,625 955,645 985,665 1005,675 1035,685 1050,692 1067,700 1067,740 1060,755 1045,770 1041,780 1041,812 1032,825 1020,845 1000,850 985,858 980,875 970,890 960,902 945,918 925,935 910,950 905,960 885,963 870,978 863,990 860,1005 855,1012 862,1018 850,1028 860,1030 865,1021 900,1021 910,1033 920,1038 918,1050 910,1055 870,1058 868,1068 860,1076 775,1076 757,1063 750,1055 748,1040 735,1020 740,1008 750,1000 750,980 757,970 757,925 770,918 772,885 778,880 778,858 788,850 792,832 792,812 780,800 758,785 745,765 735,745 725,730 715,720 715,665 728,650 735,638 722,632 700,620 680,603 665,590 630,575 600,567 560,550 543,535 535,515 530,515 527,521 508,521 500,510 480,490 465,470 463,455 430,443 415,418 402,398 402,338 385,325 365,312 345,302 328,285 310,270 300,262 285,257 260,262 240,270 205,285 160,298 130,308 90,308 78,295 78,280 100,272 122,262 100,250 88,238 68,238 68,243 24,243`),
  P(`2518,908 2530,905 2565,906 2568,925 2583,928 2583,970 2562,978 2545,1000 2528,1018 2490,1018 2470,1002 2470,985 2490,968 2510,955 2520,948 2518,935 2510,930 2512,918`),
  P('24,933 30,933 30,953 24,953'),
  P(`24,1220 38,1220 45,1232 60,1232 95,1225 120,1213 145,1203 230,1203 268,1192 370,1192 372,1183 545,1181 558,1171 678,1171 680,1177 720,1177 740,1158 760,1148 790,1140 810,1127 843,1114 920,1114 930,1122 941,1127 940,1138 905,1148 908,1160 930,1172 933,1190 945,1200 948,1212 1030,1212 1032,1203 1090,1193 1125,1183 1145,1176 1190,1173 1225,1160 1255,1155 1494,1155 1494,1148 1566,1145 1605,1135 1629,1133 1629,1125 1737,1125 1740,1133 1800,1134 1802,1139 1855,1139 1857,1134 1935,1133 1937,1125 2334,1125 2336,1133 2380,1136 2400,1144 2465,1148 2485,1160 2540,1162 2545,1170 2565,1176 2583,1192 2583,1197 2563,1203 2563,1211 2583,1213 2583,1239 2568,1240 2570,1248 2583,1248 2583,1312 24,1312`),
]
const islands: number[][] = [[198, 531, 18, 18], [653, 674, 18, 18], [2445, 737, 18, 18], [2484, 820, 20, 20], [2565, 794, 18, 18], [1798, 1023, 30, 18]]
const holes: Pt[][] = [
  P('678,238 700,238 700,246 714,246 714,257 698,257 698,250 678,250'),
  P('840,143 849,143 849,151 840,151'),
  P('628,485 640,478 680,474 697,471 697,485 703,490 690,500 665,505 650,518 640,522 628,512 622,500'),
  P('1425,413 1446,413 1446,421 1438,428 1425,428'),
  P('1503,428 1530,428 1530,436 1503,436'),
  P('1845,101 1872,101 1872,107 1887,107 1887,114 1858,114 1858,108 1845,108'),
  P('2242,388 2255,378 2277,378 2277,388 2262,390 2255,398 2248,392'),
  P('2094,545 2108,525 2148,522 2148,535 2142,540 2142,575 2155,590 2160,610 2165,630 2175,640 2198,642 2198,649 2157,649 2160,625 2148,612 2130,606 2110,608 2100,618 2085,632 2075,643 2063,645 2063,662 2056,662 2056,630 2048,625 2065,618 2080,605 2094,600'),
  P('2215,715 2240,715 2247,728 2278,735 2285,743 2270,740 2240,736 2218,734'),
  P('2198,750 2214,750 2214,757 2198,757'),
  P('2282,742 2296,742 2296,750 2282,750'),
  P('2308,748 2322,748 2322,757 2308,757'),
  P('24,1236 45,1236 45,1241 30,1241 30,1248 24,1248'),
]

function inside(poly: Pt[], x: number, y: number): boolean {
  let hit = false
  for (let i = 0, j = poly.length - 1; i < poly.length; j = i++) {
    const [xi, yi] = poly[i]
    const [xj, yj] = poly[j]
    if (yi > y !== yj > y && x < ((xj - xi) * (y - yi)) / (yj - yi) + xi) hit = !hit
  }
  return hit
}

/* One-degree cells merged into horizontal runs. */
function cellPath(): string {
  let d = ''
  for (let row = 0; row < ROWS; row++) {
    const y0 = Math.round((row * H) / ROWS)
    const y1 = Math.round(((row + 1) * H) / ROWS)
    const cy = 30 + ((row + 0.5) * H * 3) / ROWS
    let start = -1
    for (let col = 0; col <= COLS; col++) {
      const cx = 24 + ((col + 0.5) * W * 3) / COLS
      const on = col < COLS
        && (land.some(p => inside(p, cx, cy)) || islands.some(([x, y, a, b]) => ((cx - x) / a) ** 2 + ((cy - y) / b) ** 2 <= 1))
        && !holes.some(p => inside(p, cx, cy))
      if (on && start < 0) start = col
      if (!on && start >= 0) {
        const x0 = Math.round((start * W) / COLS)
        const x1 = Math.round((col * W) / COLS)
        d += `M${x0} ${y0}H${x1}V${y1}H${x0}z`
        start = -1
      }
    }
  }
  return d
}
const landPath = cellPath()

/* x, y, rx, ry, grey, rotation */
const tones: number[][] = [
  [50, 190, 50, 40, 72, 0], [200, 165, 110, 22, 34, 0], [400, 130, 60, 30, 34, 0], [300, 200, 110, 30, 84, 0], [405, 285, 100, 30, 140, 32], [300, 242, 115, 26, 225, 8], [470, 330, 60, 25, 90, 35],
  [130, 285, 60, 22, 44, 0], [490, 180, 70, 50, 74, 0], [590, 155, 60, 55, 24, 30], [620, 205, 40, 22, 36, 0], [530, 240, 60, 30, 70, 0], [575, 295, 75, 38, 26, 0], [500, 408, 42, 26, 32, 0], [640, 385, 50, 22, 48, 0], [630, 438, 58, 24, 102, -8],
  [560, 380, 50, 22, 72, 20], [770, 95, 210, 36, 140, 6], [730, 150, 90, 40, 108, 0], [890, 145, 130, 36, 165, 25], [980, 222, 95, 34, 178, 0], [1050, 190, 130, 34, 180, -12], [1160, 130, 110, 36, 130, -20], [1120, 95, 150, 24, 135, 0],
  [1045, 136, 66, 26, 66, 0], [1190, 205, 60, 14, 84, 0], [770, 235, 60, 30, 92, 0], [715, 308, 70, 38, 82, 0], [850, 290, 70, 32, 76, 0], [870, 238, 40, 14, 48, 0], [760, 370, 70, 40, 62, 0],
  [560, 510, 100, 34, 36, 20], [690, 570, 100, 36, 30, 25], [800, 535, 60, 20, 46, 0], [790, 600, 90, 40, 20, 0], [838, 621, 80, 34, 0, 8], [900, 645, 50, 24, 22, 0],
  [860, 740, 150, 70, 104, 0], [850, 708, 110, 34, 150, 0], [850, 708, 60, 20, 168, 0], [970, 730, 70, 50, 96, 0], [915, 790, 50, 26, 110, 0], [1040, 720, 34, 60, 56, 0], [850, 840, 90, 26, 54, 0], [880, 895, 80, 50, 104, 0], [890, 908, 50, 26, 112, -20], [820, 965, 70, 28, 36, 0], [785, 1016, 46, 24, 100, 0], [890, 1040, 34, 14, 44, 0],
  [1240, 500, 70, 70, 66, 0], [1225, 570, 60, 34, 34, 0], [1450, 605, 150, 44, 24, 0], [1310, 605, 90, 42, 6, 0], [1560, 590, 60, 30, 34, 0], [1320, 340, 70, 40, 74, 0], [1375, 390, 65, 44, 30, 0], [1430, 265, 70, 20, 48, 0],
  [1460, 195, 100, 30, 84, 0], [1400, 300, 70, 26, 84, 0], [1560, 395, 160, 30, 86, 0], [1660, 435, 60, 24, 86, 30], [1530, 500, 60, 50, 68, 0], [1400, 500, 70, 34, 68, 0], [1480, 450, 120, 20, 52, 0],
  [1440, 112, 130, 18, 106, 0], [1860, 245, 330, 110, 88, 0], [1715, 265, 120, 66, 108, 0], [1720, 135, 100, 28, 90, 0], [1960, 215, 120, 80, 108, 0], [1840, 140, 70, 28, 48, 0], [2100, 145, 80, 50, 40, 0], [1980, 120, 70, 28, 84, 0], [1720, 380, 60, 32, 42, 0], [1800, 395, 50, 30, 84, 0],
  [1950, 412, 160, 28, 32, 0], [2020, 340, 130, 40, 68, 0], [2100, 395, 70, 24, 84, 0], [2160, 415, 70, 24, 34, -20], [1848, 457, 62, 40, 118, 0], [1970, 460, 80, 20, 78, -10], [2100, 470, 70, 24, 62, 0], [1865, 525, 120, 44, 20, 0], [1995, 522, 95, 48, 0, 20], [1860, 600, 60, 36, 44, 0], [2080, 560, 60, 40, 34, 0],
  [1995, 610, 44, 44, 98, 0], [1990, 675, 34, 24, 18, 50], [2080, 700, 80, 34, 80, 0], [2180, 700, 50, 50, 40, 0], [2290, 705, 70, 28, 70, 0], [2390, 720, 50, 30, 40, 0], [2190, 160, 70, 34, 90, 0], [2270, 140, 100, 26, 34, 0], [2250, 270, 80, 50, 44, 0], [2280, 380, 110, 80, 38, 0], [2260, 320, 80, 26, 54, 0],
  [2420, 195, 120, 40, 108, 8], [2510, 220, 80, 30, 98, 0], [2530, 160, 80, 16, 50, 0], [2400, 300, 50, 22, 68, 0], [2140, 330, 60, 60, 70, 0],
  [1480, 680, 110, 34, 100, 0], [1500, 732, 140, 46, 124, 0], [1480, 705, 90, 30, 122, 0], [1420, 820, 40, 40, 54, 0], [1480, 870, 70, 36, 76, 0], [1530, 810, 36, 36, 76, 0], [1520, 910, 40, 20, 42, 0], [1634, 810, 30, 36, 76, 0],
  [2210, 823, 110, 30, 108, 8], [2240, 760, 70, 34, 72, 0], [2350, 810, 70, 70, 36, 0], [2260, 880, 70, 36, 60, 0], [2140, 870, 40, 50, 68, 0], [2340, 935, 60, 34, 74, 0], [2380, 880, 30, 40, 60, 0], [2520, 970, 90, 90, 38, 0],
  [170, 1225, 140, 30, 70, 0], [1000, 1255, 900, 40, 34, 0], [520, 1212, 320, 46, 110, 0], [380, 1250, 280, 26, 4, 0], [540, 1207, 210, 36, 225, 0], [540, 1206, 150, 26, 255, 0], [840, 1142, 120, 32, 125, -10], [760, 1180, 80, 26, 110, -20], [900, 1220, 160, 50, 14, 0], [1110, 1216, 80, 28, 70, 0],
  [1245, 1188, 70, 36, 22, 0], [1385, 1200, 100, 46, 70, 0], [1500, 1180, 70, 26, 38, 0], [1690, 1150, 110, 40, 8, 0], [1800, 1205, 100, 50, 70, 0], [1930, 1152, 110, 30, 14, 0], [1600, 1205, 90, 22, 56, 0], [2040, 1205, 100, 44, 68, 0], [2120, 1155, 100, 22, 86, 0], [2170, 1190, 60, 22, 40, 0], [2410, 1174, 90, 30, 98, 0], [2540, 1195, 80, 30, 32, 0], [2380, 1230, 240, 40, 62, 0],
  [1700, 1268, 360, 26, 56, 0], [1300, 1308, 1500, 20, 50, 0],
]
const greys = [...new Set(tones.map(t => t[4]))]
</script>

<template>
  <div class="app">
    <header class="title">
      <svg class="logo" viewBox="0 0 16 16">
        <circle cx="7.700" cy="7.800" r="5.700" fill="none" stroke="#6aa52c" stroke-width="3.200" />
        <path d="M7.500 7.500h3l4.800 4.800v3.200h-3.400L7.500 11z" fill="#ee7913" stroke="#fff" stroke-width=".5" />
        <path d="M7.500 7.500h2.800l2.500 2.600-2.600 2.500L7.500 10.500z" fill="#f5b52a" />
        <path d="M12 12l3.500 3.500h-3.800L10 13.800z" fill="#5d9427" />
      </svg>
      <span v-fit="109">IHEWAcollect - QGIS</span>
      <svg class="winbtns" width="120" height="22" viewBox="0 0 120 22" fill="none" stroke="#000" stroke-width="1">
        <path d="M0 10.500h10M45.500 7.500h7v7h-7zM47.500 7.500v-2h7v7h-2" shape-rendering="crispEdges" />
        <path d="M91 5.500l9.500 9.500M100.500 5.500L91 15" />
      </svg>
    </header>
    <nav class="menu">
      <span v-for="m in menus" :key="m[1] + m[2]" class="mi" :style="{ width: m[3] + 'px' }"><span v-fit="m[3]">{{ m[0] }}<u>{{ m[1] }}</u>{{ m[2] }}</span></span>
    </nav>
    <div v-for="(bar, bi) in [bar1, bar2]" :key="bi" class="bar">
      <template v-for="(n, i) in bar" :key="i">
        <span v-if="n === '|'" class="grip"><i /></span>
        <span v-else-if="n === 'v' || n === '-v'" class="drop" :class="{ dim: n[0] === '-' }"><i /></span>
        <span v-else class="tool" :class="{ on: n[0] === '*', dim: n[0] === '-' }">
          <svg viewBox="0 0 16 16" v-html="icons[n.replace(/^[-*]/, '')]" />
        </span>
      </template>
    </div>

    <main class="work">
      <aside class="docks">
        <section class="dock browser">
          <div class="dtitle">
            <span v-fit="42">Browser</span>
            <svg class="dbtns" width="26" height="12" viewBox="0 0 26 12" fill="none" stroke="#555">
              <rect x=".5" y=".5" width="10.500" height="10.500" rx="2" /><path d="M3 5h4v4H3zM5 5V3h4v4H7" />
              <rect x="14.500" y=".5" width="10.500" height="10.500" rx="2" /><path d="M17 3l5.500 5.500M22.500 3L17 8.500" stroke-width="1.900" />
            </svg>
          </div>
          <div class="dbar">
            <svg v-for="n in ['addl', 'refresh', 'filter', 'collapse', 'info']" :key="n" viewBox="0 0 16 16" v-html="icons[n]" />
          </div>
          <div class="frame">
            <div class="view">
              <div class="rows">
                <div v-for="(o, i) in browser" :key="i" class="row" :class="o.k" :style="{ paddingLeft: 63 + o.l * 20 + 'px' }">
                  <span class="arr" :class="o.a" />
                  <svg class="ic" viewBox="0 0 16 16" v-html="icons[o.i!]" />
                  <span v-fit="o.w" class="lbl">{{ o.t }}</span>
                </div>
              </div>
              <div class="vs">
                <span class="sb up" /><span class="gap1" /><span class="thumb t1" /><span class="fill" /><span class="sb down" />
              </div>
            </div>
            <div class="hs"><span class="hb left" /><span class="hthumb" /><span class="htrough" /><span class="hb right" /><span class="corner" /></div>
          </div>
        </section>
        <div class="split"><i /></div>
        <section class="dock layers">
          <div class="dtitle">
            <span v-fit="33">Layers</span>
            <svg class="dbtns" width="26" height="12" viewBox="0 0 26 12" fill="none" stroke="#555">
              <rect x=".5" y=".5" width="10.500" height="10.500" rx="2" /><path d="M3 5h4v4H3zM5 5V3h4v4H7" />
              <rect x="14.500" y=".5" width="10.500" height="10.500" rx="2" /><path d="M17 3l5.500 5.500M22.500 3L17 8.500" stroke-width="1.900" />
            </svg>
          </div>
          <div class="dbar">
            <svg viewBox="0 0 16 16" v-html="icons.brush" />
            <svg viewBox="0 0 16 16" v-html="icons.group + plusBadge" />
            <svg viewBox="0 0 16 16" v-html="icons.eye" />
            <svg viewBox="0 0 16 16" v-html="icons.filter" />
            <svg class="dim" viewBox="0 0 16 16" v-html="icons.eps" />
            <span class="drop dim"><i /></span>
            <svg viewBox="0 0 16 16" v-html="icons.expand" />
            <svg viewBox="0 0 16 16" v-html="icons.collapse" />
            <svg viewBox="0 0 16 16" v-html="icons.removel" />
          </div>
          <div class="frame">
            <div class="view">
              <div class="rows">
                <div v-for="(o, i) in layers" :key="i" class="row" :class="o.k" :style="{ paddingLeft: 23 + o.l * 20 + 'px' }">
                  <span class="arr" :class="o.a" />
                  <template v-if="o.i">
                    <span class="cb" :class="{ soft: o.c === 2 }">
                      <svg v-if="o.c" viewBox="0 0 12 12"><path d="M2.500 5.500L5 9.300 9.500 2" fill="none" stroke="currentColor" stroke-width="1.900" /></svg>
                    </span>
                    <svg class="ic" viewBox="0 0 16 16" v-html="icons[o.i]" />
                  </template>
                  <span v-else class="swatch" />
                  <span v-fit="o.w" class="lbl">{{ o.t }}</span>
                </div>
              </div>
              <div class="vs">
                <span class="sb up" /><span class="gap2" /><span class="thumb t2" /><span class="fill" /><span class="sb down" />
              </div>
            </div>
          </div>
        </section>
      </aside>
      <div class="gutter"><i /></div>
      <section class="canvas">
        <svg class="map" :width="W" :height="H" :viewBox="`0 0 ${W} ${H}`">
          <defs>
            <clipPath id="land"><path :d="landPath" shape-rendering="crispEdges" /></clipPath>
            <radialGradient v-for="v in greys" :id="'tone' + v" :key="v">
              <stop offset="0" :stop-color="`rgb(${v},${v},${v})`" stop-opacity="1" />
              <stop offset=".25" :stop-color="`rgb(${v},${v},${v})`" stop-opacity=".86" />
              <stop offset=".5" :stop-color="`rgb(${v},${v},${v})`" stop-opacity=".5" />
              <stop offset=".75" :stop-color="`rgb(${v},${v},${v})`" stop-opacity=".16" />
              <stop offset="1" :stop-color="`rgb(${v},${v},${v})`" stop-opacity="0" />
            </radialGradient>
          </defs>
          <rect :width="W" :height="H" fill="#f9f9f9" />
          <g clip-path="url(#land)">
            <rect :width="W" :height="H" fill="#393939" />
            <g transform="scale(.33333) translate(-24 -30)">
              <ellipse v-for="(t, i) in tones" :key="i" :cx="t[0]" :cy="t[1]" :rx="t[2] * 1.350" :ry="t[3] * 1.350" :fill="`url(#tone${t[4]})`" :transform="`rotate(${t[5]} ${t[0]} ${t[1]})`" />
            </g>
          </g>
          <rect x="132" y="0" width="589" :height="H" fill="rgb(100,80,255)" opacity=".04" />
        </svg>
        <div class="ghost"><i /><span v-fit="70">Window Snip</span></div>
      </section>
    </main>

    <footer class="status">
      <div class="locate"><svg viewBox="0 0 16 16" v-html="icons.search" /><span v-fit="111">Type to locate (Ctrl+K)</span></div>
      <div class="grow" />
      <span class="cell co"><span v-fit="53">Coordinate</span></span>
      <span class="box b1"><span v-fit="57">-59.3,110.8</span></span>
      <svg class="si mo" viewBox="0 0 16 16" v-html="icons.mouse" />
      <span class="cell sc"><span v-fit="25">Scale</span></span>
      <span class="box b2"><span v-fit="53">176456626</span><b class="cbtn"><i /></b></span>
      <svg class="si lk" viewBox="0 0 16 16" v-html="icons.lock" />
      <span class="cell mg"><span v-fit="44">Magnifier</span></span>
      <span class="box b3"><span v-fit="29">100%</span><b class="spin"><i /><i /></b></span>
      <span class="cell ro"><span v-fit="41">Rotation</span></span>
      <span class="box b4"><span v-fit="25">0.0 °</span><b class="spin"><i /><i /></b></span>
      <span class="cb rcb"><svg viewBox="0 0 12 12"><path d="M2.500 5.500L5 9.300 9.500 2" fill="none" stroke="currentColor" stroke-width="1.900" /></svg></span>
      <span class="cell rd"><span v-fit="35">Render</span></span>
      <svg class="si cr" viewBox="0 0 16 16" v-html="icons.crs" />
      <span class="cell ep"><span v-fit="54">EPSG:4326</span></span>
      <svg class="si bu" viewBox="0 0 16 16" v-html="icons.bubble" />
    </footer>
  </div>
</template>

<style>
html, body { margin: 0; overflow: hidden; background: #efefef; }
</style>

<style scoped>
* { box-sizing: border-box; }
.app { width: 1920px; height: 1050px; display: flex; flex-direction: column; background: #efefef; color: #000; font: 12px/18px "Open Sans", "Noto Sans", sans-serif; white-space: nowrap; overflow: hidden; }
.app svg { display: block; flex: none; }
.title { height: 23px; flex: none; background: #fff; display: flex; align-items: center; padding-left: 2px; }
.logo { width: 16px; height: 16px; margin-right: 5px; }
.winbtns { margin-left: auto; margin-right: 1px; }
.menu { height: 20px; flex: none; display: flex; gap: 14px; padding: 1px 0 0 10px; align-items: center; border-bottom: 1px solid #d2d2d2; }
.mi { flex: none; overflow: visible; }
.mi u { text-underline-offset: 2px; text-decoration-thickness: 1px; }
.bar { height: 31px; flex: none; display: flex; align-items: center; background: linear-gradient(#fafafa, #ededed); border-bottom: 1px solid #b4b4b4; }
.grip { width: 16px; height: 18px; flex: none; display: flex; justify-content: center; padding-left: 4px; }
.grip:first-child { width: 12.500px; padding-left: 1px; }
.grip i { width: 4px; height: 17px; background: radial-gradient(circle, #b0b0b0 .7px, transparent .8px) 0 0 / 2px 2.400px; }
.tool { width: 25px; height: 23px; flex: none; display: flex; align-items: center; justify-content: center; border: 1px solid transparent; border-radius: 3px; }
.tool svg { width: 16px; height: 16px; overflow: visible; }
.tool.on { background: #dcdcdc; border-color: #a9a9a9; }
.tool.dim svg { opacity: .38; filter: grayscale(.75); }
.drop { width: 12px; flex: none; display: flex; justify-content: center; }
.drop i { border: 3.500px solid transparent; border-top: 4px solid #4c4c4c; border-bottom: 0; }
.drop.dim { opacity: .6; }
.bar .drop { padding-right: 1px; }
.work { flex: none; height: 917px; display: flex; }
.docks { width: 568px; flex: none; display: flex; flex-direction: column; }
.dock { display: flex; flex-direction: column; }
.dock.browser { height: 415px; }
.dock.layers { height: 497px; }
.dtitle { height: 20px; flex: none; display: flex; align-items: center; padding-left: 4px; }
.dbtns { margin-left: auto; margin-right: 1px; }
.dbar { height: 30px; flex: none; display: flex; align-items: center; gap: 9px; padding: 0 0 2px 8px; }
.dbar svg { width: 16px; height: 16px; }
.dbar .drop { margin: 0 -4px 0 -5px; }
.dbar svg.dim { opacity: .6; }
.frame { flex: 1; min-height: 0; background: #fff; border: 1px solid #b4b4b4; display: flex; flex-direction: column; }
.layers .dtitle { height: 21px; padding-top: 1px; }
.view { flex: 1; min-height: 0; display: flex; overflow: hidden; }
.rows { flex: 1; min-width: 0; overflow: hidden; }
.row { height: 18px; display: flex; align-items: center; overflow: hidden; }
.arr { width: 13px; height: 18px; flex: none; display: flex; align-items: center; justify-content: center; }
.arr::before { content: ""; margin-top: -1px; }
.arr.r::before { border: 4px solid transparent; border-left: 4px solid #4f4f4f; border-right: 0; }
.arr.d::before { border: 4px solid transparent; border-top: 4px solid #4f4f4f; border-bottom: 0; margin-top: -2px; }
.ic { width: 16px; height: 16px; margin: 0 6px 0 7px; }
.lbl { flex: none; padding-top: 2px; }
.hover { background: #f0f0f0; }
.sel { color: #fff; background: linear-gradient(#1986df, #0b7bd8); }
.sel .arr.d::before { border-top-color: #0f2f4f; }
.bold { font-weight: 700; }
.off .lbl { color: #b7b7b7; font-style: italic; font-weight: 600; }
.cb { width: 14px; height: 14px; flex: none; margin-left: 7px; background: #fff; border: 1px solid #b8b8b8; color: #000; }
.cb svg { width: 12px; height: 12px; }
.cb.soft { color: #b4b4b4; }
.layers .ic { margin: 0 6px 0 6px; }
.swatch { width: 16px; height: 16px; flex: none; margin: 0 6px 0 26px; }
.black .swatch { background: #000; }
.vs { width: 14px; flex: none; border-left: 1px solid #b4b4b4; background: #e4e4e4; display: flex; flex-direction: column; }
.sb { height: 14px; flex: none; background: #fafafa; border-bottom: 1px solid #b4b4b4; display: flex; align-items: center; justify-content: center; }
.sb.down { border-bottom: 0; border-top: 1px solid #b4b4b4; }
.sb::before { content: ""; border: 3.500px solid transparent; }
.sb.up::before { border-bottom: 4px solid #4f4f4f; border-top: 0; }
.sb.down::before { border-top: 4px solid #4f4f4f; border-bottom: 0; }
.thumb { flex: none; background: linear-gradient(90deg, #fff, #f2f2f2); border: solid #b4b4b4; border-width: 1px 0; }
.gap1 { height: 49px; flex: none; } .t1 { height: 57px; }
.gap2 { height: 61px; flex: none; } .t2 { height: 36px; }
.fill { flex: 1; }
.hs { height: 14px; flex: none; border-top: 1px solid #b4b4b4; display: flex; background: #e4e4e4; }
.hb { width: 14px; flex: none; background: #fafafa; display: flex; align-items: center; justify-content: center; }
.hb::before { content: ""; border: 3.500px solid transparent; }
.hb.left { border-right: 1px solid #b4b4b4; } .hb.left::before { border-right: 4px solid #4f4f4f; border-left: 0; }
.hb.right { border-left: 1px solid #b4b4b4; } .hb.right::before { border-left: 4px solid #4f4f4f; border-right: 0; }
.hthumb { width: 519px; flex: none; background: linear-gradient(#fff, #f2f2f2); border-right: 1px solid #b4b4b4; }
.htrough { width: 6px; flex: none; }
.corner { flex: 1; background: #efefef; border-left: 1px solid #b4b4b4; }
.split { height: 5px; flex: none; display: flex; justify-content: center; align-items: center; }
.split i { width: 17px; height: 2px; background: radial-gradient(circle, #bbb .6px, transparent .8px) 0 0 / 3px 2px; }
.gutter { width: 6px; flex: none; display: flex; justify-content: center; padding-top: 451px; }
.gutter i { width: 2px; height: 17px; background: radial-gradient(circle, #bbb .6px, transparent .8px) 0 0 / 2px 3px; }
.canvas { flex: 1; background: #fff; border: 1px solid #b4b4b4; position: relative; padding: 244px 0 0 33px; }
.ghost { position: absolute; left: 309px; top: 201px; width: 173px; height: 22px; background: #f7fbff; color: #e4ebf2; display: flex; align-items: center; padding-left: 8px; }
.ghost i { width: 7px; height: 5px; background: #e0effc; border-radius: 2px; margin-right: 17px; }
.status { flex: 1; display: flex; align-items: center; padding-top: 1px; }
.locate { width: 200px; height: 22px; margin-left: 4px; background: #fff; border: 1px solid #a9a9a9; border-radius: 3px; display: flex; align-items: center; padding-left: 8px; color: #777; }
.locate svg { width: 13px; height: 13px; margin-right: 7px; }
.grow { flex: 1; }
.cell { flex: none; }
.co { width: 57px; }
.box { height: 22px; flex: none; background: #fff; border: 1px solid #a9a9a9; border-radius: 3px; display: flex; align-items: center; overflow: hidden; }
.box > span { flex: none; }
.box b { margin-left: auto; height: 20px; flex: none; border-left: 1px solid #b4b4b4; display: flex; flex-direction: column; align-items: center; justify-content: center; gap: 4px; background: #f6f6f6; }
.b1 { width: 74px; padding-left: 6px; }
.b2 { width: 80px; padding-left: 2px; }
.b3 { width: 88px; height: 20px; padding-left: 4px; }
.b4 { width: 84px; height: 20px; padding-left: 4px; }
.cbtn { width: 19px; background: #fff; }
.spin { width: 14px; }
.box b i { border: 3.500px solid transparent; }
.cbtn i, .spin i:last-child { border-top: 4px solid #4f4f4f !important; border-bottom: 0 !important; }
.spin i:first-child { border-bottom: 4px solid #4f4f4f !important; border-top: 0 !important; }
.si { width: 16px; height: 16px; }
.mo { margin: 0 13px 0 4px; }
.sc { width: 28.500px; }
.lk { width: 14px; height: 15px; margin: 0 6.500px 0 11px; }
.mg { width: 48px; }
.ro { width: 50.500px; margin-left: 8.500px; }
.rcb { margin: 0 4px 0 7px; }
.rd { width: 53px; }
.cr { margin-right: 3px; }
.ep { width: 73px; }
.bu { margin-right: 7px; }
</style>
